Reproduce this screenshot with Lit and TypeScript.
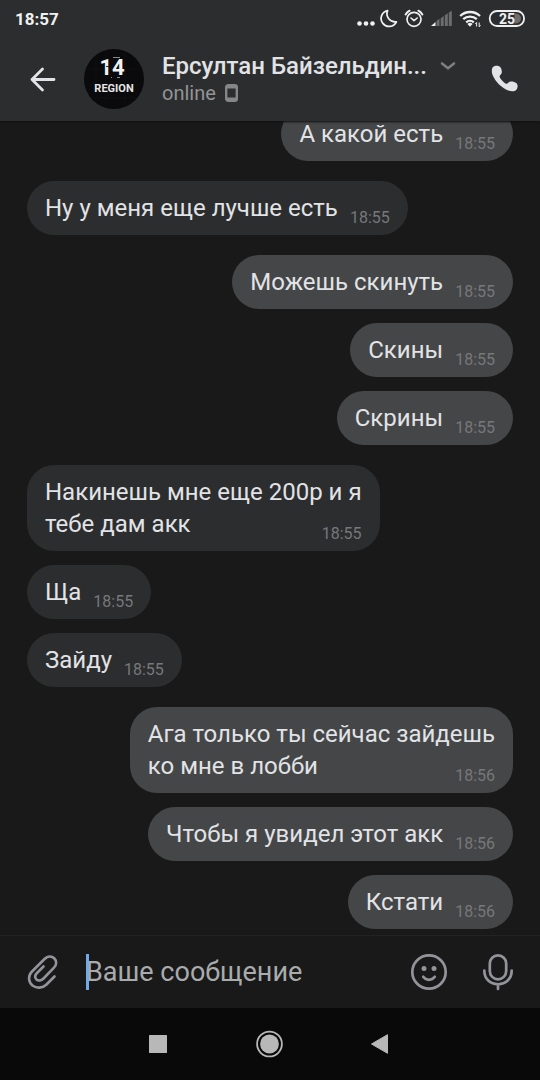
import { LitElement, html, css } from "lit";
import { customElement, property, state } from "lit/decorators.js";
import { classMap } from "lit/directives/class-map.js";

interface Message {
  text: string;
  time: string;
  own: boolean;
}

const MESSAGES: Message[] = [
  { text: "А какой есть", time: "18:55", own: true },
  { text: "Ну у меня еще лучше есть", time: "18:55", own: false },
  { text: "Можешь скинуть", time: "18:55", own: true },
  { text: "Скины", time: "18:55", own: true },
  { text: "Скрины", time: "18:55", own: true },
  { text: "Накинешь мне еще 200р и я\nтебе дам акк", time: "18:55", own: false },
  { text: "Ща", time: "18:55", own: false },
  { text: "Зайду", time: "18:55", own: false },
  { text: "Ага только ты сейчас зайдешь\nко мне в лобби", time: "18:56", own: true },
  { text: "Чтобы я увидел этот акк", time: "18:56", own: true },
  { text: "Кстати", time: "18:56", own: true },
];

@customElement("status-bar")
export class StatusBar extends LitElement {
  static styles = css`
    :host {
      display: flex;
      align-items: center;
      justify-content: space-between;
      height: 38px;
      padding: 0 15px;
      color: #f0f0f1;
    }
    .clock {
      font-size: 17px;
      font-weight: 700;
      line-height: 20px;
    }
    .icons {
      display: block;
    }
    .level {
      font-size: 14px;
      font-weight: 700;
    }
  `;

  render() {
    return html`
      <span class="clock">18:57</span>
      <svg class="icons" width="168" height="38" viewBox="357 0 168 38" fill="none" stroke="currentColor">
        <g fill="currentColor" stroke="none">
          <circle cx="359.500" cy="23.500" r="2.300" />
          <circle cx="366" cy="23.500" r="2.300" />
          <circle cx="372.500" cy="23.500" r="2.300" />
        </g>
        <path d="M387.600 10.600a8 8 0 1 0 8.800 11.200a8.200 8.200 0 0 1-8.800-11.200z" stroke-width="1.700" stroke-linejoin="round" />
        <circle cx="414" cy="19.300" r="7" stroke-width="1.700" />
        <path d="M405.600 14.500a10 10 0 0 1 4-3.800M422.400 14.500a10 10 0 0 0-4-3.800" stroke-width="2" stroke-linecap="round" />
        <path d="M411 18l3 2.600l3.200-2.600" stroke-width="1.600" stroke-linecap="round" stroke-linejoin="round" />
        <path d="M431 26l4.500-4v4z" fill="currentColor" stroke="none" />
        <g fill="#6c6d6e" stroke="none">
          <path d="M436.500 21l3-2.200V26h-3zM440.700 18.200l3-2.200V26h-3zM444.800 15.200l3-2V26h-3zM448.800 12.600l3-1.900V26h-3z" />
        </g>
        <g stroke-width="2.300">
          <path d="M460.200 16a14.200 14.200 0 0 1 19.800 0" />
          <path d="M463.200 19.200a10 10 0 0 1 13.600 0" />
          <path d="M466.200 22.300a5.700 5.700 0 0 1 7.600 0" />
        </g>
        <path d="M467.400 24a3.800 3.800 0 0 1 5.200 0l-2.600 2.800z" fill="currentColor" stroke="none" />
        <path d="M476.600 22.500v4m-1.300-2.600l1.300-1.400M479.200 22.500v4.300m1.300-1.500l-1.300 1.500" stroke-width="1" />
        <path d="M514.500 13.500h1.500a5 5 0 0 1 0 10h-1.500z" fill="#6c6d6e" stroke="none" />
        <rect x="489.700" y="11" width="34.400" height="15" rx="7.500" stroke-width="1.800" />
        <text class="level" x="499" y="23.500" fill="currentColor" stroke="none">25</text>
      </svg>
    `;
  }
}

@customElement("chat-header")
export class ChatHeader extends LitElement {
  static styles = css`
    :host {
      display: flex;
      align-items: center;
      height: 81px;
      padding: 0 20px 2px 27px;
      color: #e1e3e6;
    }
    button {
      display: flex;
      padding: 0;
      border: 0;
      background: none;
      color: inherit;
      font: inherit;
      text-align: left;
    }
    svg {
      display: block;
      flex: none;
    }
    .avatar {
      margin-left: 25px;
    }
    .top {
      font: 700 22px "Roboto", sans-serif;
    }
    .bottom {
      font: 700 11px "Roboto", sans-serif;
    }
    .peer {
      flex: 1;
      min-width: 0;
      margin-left: 18px;
      gap: 12px;
    }
    .info {
      display: flex;
      flex-direction: column;
      min-width: 0;
    }
    .name {
      font-size: 24px;
      font-weight: 500;
      line-height: 28px;
      overflow: hidden;
      text-overflow: ellipsis;
      white-space: nowrap;
    }
    .presence {
      display: flex;
      align-items: center;
      gap: 9px;
      font-size: 20px;
      line-height: 26px;
      color: #939496;
    }
    .chevron {
      margin-top: 8px;
    }
  `;

  render() {
    return html`
      <button aria-label="Назад">
        <svg width="32" height="32" viewBox="0 0 32 32" fill="none" stroke="currentColor" stroke-width="2.800" stroke-linecap="round" stroke-linejoin="round">
          <path d="M15.500 6L5 16.500L15.500 27M5 16.500H27" />
        </svg>
      </button>
      <svg class="avatar" width="60" height="60" viewBox="0 0 60 60" role="img" aria-label="14 REGION">
        <circle cx="30" cy="30" r="30" fill="#0a090b" />
        <path d="M12 8v42M22 3v54M41 3v54M3 20h54M2 36h56M8 49h44" stroke="#0f0e12" stroke-width="1" />
        <text class="top" x="28" y="26" text-anchor="middle" fill="#f1f1f1">14</text>
        <path d="M29 8.500h7M33 28.500h3M27 28.500h1" stroke="#8a8a8a" stroke-width="1" />
        <path d="M22 17.500h3M31 23.500h3" stroke="#0a090b" stroke-width="0.800" />
        <text class="bottom" x="30" y="43" text-anchor="middle" fill="#e6e6e6">REGION</text>
      </svg>
      <button class="peer">
        <span class="info">
          <span class="name">Ерсултан Байзельдин...</span>
          <span class="presence">
            online
            <svg width="13" height="18" viewBox="0 0 13 18" fill="none">
              <rect x="1.200" y="1.200" width="10.600" height="15.600" rx="2" stroke="#858688" stroke-width="2.400" />
              <path d="M1 15h11M1 3h11" stroke="#858688" stroke-width="3" />
            </svg>
          </span>
        </span>
        <svg class="chevron" width="18" height="12" viewBox="0 0 18 12" fill="none" stroke="#7d7e80" stroke-width="2.600" stroke-linecap="round" stroke-linejoin="round">
          <path d="M3 3.500l6 4.800l6-4.800" />
        </svg>
      </button>
      <button aria-label="Позвонить">
        <svg width="30" height="30" viewBox="0 0 30 30" fill="currentColor">
          <path d="M3.200 2.800C4.600 1.500 8.300 1 10 2.800C11.500 4.500 12.300 7.500 11.600 9.200C11 10.700 9.300 11.500 9.600 12.800C10 14.800 13.800 18.800 16 19.700C17.500 20.300 18.200 18.400 19.700 17.800C21.500 17 24.500 17.700 26.300 19.100C28.200 20.700 27.800 24.200 26.400 25.700C24.700 27.500 21.500 27.600 18.300 26.500C12 24.300 5.200 17.600 2.700 11.300C1.400 8 1.500 4.500 3.200 2.800z" />
        </svg>
      </button>
    `;
  }
}

@customElement("chat-message")
export class ChatMessage extends LitElement {
  @property() text = "";
  @property() time = "";
  @property({ type: Boolean }) own = false;

  static styles = css`
    :host {
      display: flex;
    }
    .bubble {
      padding: 11px 18px;
      border-radius: 27px;
      background: #2c2d2e;
      color: #e1e3e6;
      font-size: 24px;
      line-height: 32px;
    }
    .own {
      margin-left: auto;
      background: #454647;
    }
    .line {
      display: block;
    }
    .last {
      display: flex;
      align-items: flex-end;
      justify-content: space-between;
      gap: 12px;
    }
    .time {
      margin-bottom: -4px;
      font-size: 16px;
      line-height: 20px;
      color: #76787a;
    }
  `;

  render() {
    const lines = this.text.split("\n");
    const last = lines.pop();
    return html`<div class=${classMap({ bubble: true, own: this.own })}>
      ${lines.map((line) => html`<span class="line">${line}</span>`)}
      <span class="last"><span>${last}</span><time class="time">${this.time}</time></span>
    </div>`;
  }
}

@customElement("chat-composer")
export class ChatComposer extends LitElement {
  @state() private draft = "";

  static styles = css`
    :host {
      display: flex;
      align-items: center;
      height: 72px;
      padding: 0 24px;
      border-top: 1px solid #232324;
      background: #191919;
      color: #939499;
    }
    button {
      display: flex;
      padding: 0;
      border: 0;
      background: none;
      color: inherit;
    }
    .field {
      position: relative;
      flex: 1;
      min-width: 0;
      margin: 0 24px 0 26px;
    }
    .input {
      display: block;
      box-sizing: border-box;
      width: 100%;
      height: 36px;
      padding: 0;
      border: 0;
      outline: 0;
      background: none;
      color: #e1e3e6;
      caret-color: #71aaeb;
      font: 27px/36px "Roboto", sans-serif;
    }
    .input::placeholder {
      color: #a9abad;
      opacity: 1;
    }
    .caret {
      position: absolute;
      left: 0;
      top: 0;
      width: 3px;
      height: 36px;
      background: #71aaeb;
    }
    .mic {
      margin-left: 32px;
    }
  `;

  private onInput(e: Event) {
    this.draft = (e.target as HTMLInputElement).value;
  }

  render() {
    return html`
      <button aria-label="Прикрепить">
        <svg width="36" height="40" viewBox="24 952 36 40" fill="none" stroke="currentColor" stroke-width="2.600" stroke-linecap="round" stroke-linejoin="round">
          <path d="M54.500 976.500L46.500 984.500C42.500 988.500 36.500 988.500 32.500 985.500C28 981.500 28 975.500 32 971.500L44.500 959C47.500 956 51.500 955.700 54.200 958.300C57 961 56.700 965 54 967.700L43.500 978.500C41.500 980.500 38.500 981.200 36.500 979.500C34.500 977.500 35 975 37 973L43.500 966.500" />
        </svg>
      </button>
      <div class="field">
        <input class="input" type="text" placeholder="Ваше сообщение" aria-label="Ваше сообщение" .value=${this.draft} @input=${this.onInput} />
        ${this.draft ? null : html`<span class="caret"></span>`}
      </div>
      <button aria-label="Эмодзи">
        <svg width="38" height="38" viewBox="0 0 38 38" fill="none" stroke="currentColor" stroke-width="2.700" stroke-linecap="round">
          <circle cx="19" cy="19" r="16.700" />
          <path d="M13.200 23.800c3 4 8.600 4 11.600 0" />
          <g fill="currentColor" stroke="none">
            <circle cx="14" cy="15.600" r="2.500" />
            <circle cx="24" cy="15.600" r="2.500" />
          </g>
        </svg>
      </button>
      <button class="mic" aria-label="Голосовое сообщение">
        <svg width="36" height="38" viewBox="0 0 36 38" fill="none" stroke="currentColor" stroke-width="2.700" stroke-linecap="round">
          <rect x="9.800" y="2.300" width="16.400" height="24" rx="8.200" />
          <path d="M4.300 17.500c0 8.500 6 13.800 13.700 13.800s13.700-5.300 13.700-13.800M18 31.500v4.500" />
        </svg>
      </button>
    `;
  }
}

@customElement("system-nav")
export class SystemNav extends LitElement {
  static styles = css`
    :host {
      display: flex;
      align-items: center;
      justify-content: center;
      gap: 83px;
      height: 72px;
      background: #090909;
      color: #b8b8b8;
    }
    button {
      display: flex;
      padding: 0;
      border: 0;
      background: none;
      color: inherit;
    }
  `;

  render() {
    return html`
      <button aria-label="Недавние">
        <svg width="28" height="28" viewBox="0 0 28 28" fill="currentColor">
          <rect x="4" y="5" width="18" height="18" rx="0.500" />
        </svg>
      </button>
      <button aria-label="Домой">
        <svg width="28" height="28" viewBox="0 0 28 28" fill="currentColor">
          <circle cx="13.500" cy="14" r="12.400" fill="none" stroke="currentColor" stroke-width="1.800" />
          <circle cx="13.500" cy="14" r="9.400" />
        </svg>
      </button>
      <button aria-label="Назад">
        <svg width="28" height="28" viewBox="0 0 28 28" fill="currentColor" stroke="currentColor" stroke-width="1" stroke-linejoin="round">
          <path d="M4.500 14L20.500 4.700v18.600z" />
        </svg>
      </button>
    `;
  }
}

@customElement("app-root")
export class AppRoot extends LitElement {
  static styles = css`
    :host {
      display: flex;
      flex-direction: column;
      height: 100vh;
      background: #191919;
      font-family: "Roboto", sans-serif;
    }
    .top {
      flex: none;
      background: #2c2d2e;
      box-shadow: 0 1px 2px #101010;
      z-index: 1;
    }
    .feed {
      flex: 1;
      min-height: 0;
      display: flex;
      flex-direction: column;
      justify-content: flex-end;
      overflow: hidden;
      padding: 0 27px 6px;
    }
    .message {
      flex: none;
      margin-top: 14px;
    }
    .turn {
      margin-top: 20px;
    }
    .bottom {
      flex: none;
    }
  `;

  render() {
    return html`
      <header class="top">
        <status-bar></status-bar>
        <chat-header></chat-header>
      </header>
      <main class="feed">
        ${MESSAGES.map(
          (m, i) => html`<chat-message
            class=${classMap({ message: true, turn: i > 0 && MESSAGES[i - 1].own !== m.own })}
            .text=${m.text}
            .time=${m.time}
            .own=${m.own}
          ></chat-message>`
        )}
      </main>
      <footer class="bottom">
        <chat-composer></chat-composer>
        <system-nav></system-nav>
      </footer>
    `;
  }
}
